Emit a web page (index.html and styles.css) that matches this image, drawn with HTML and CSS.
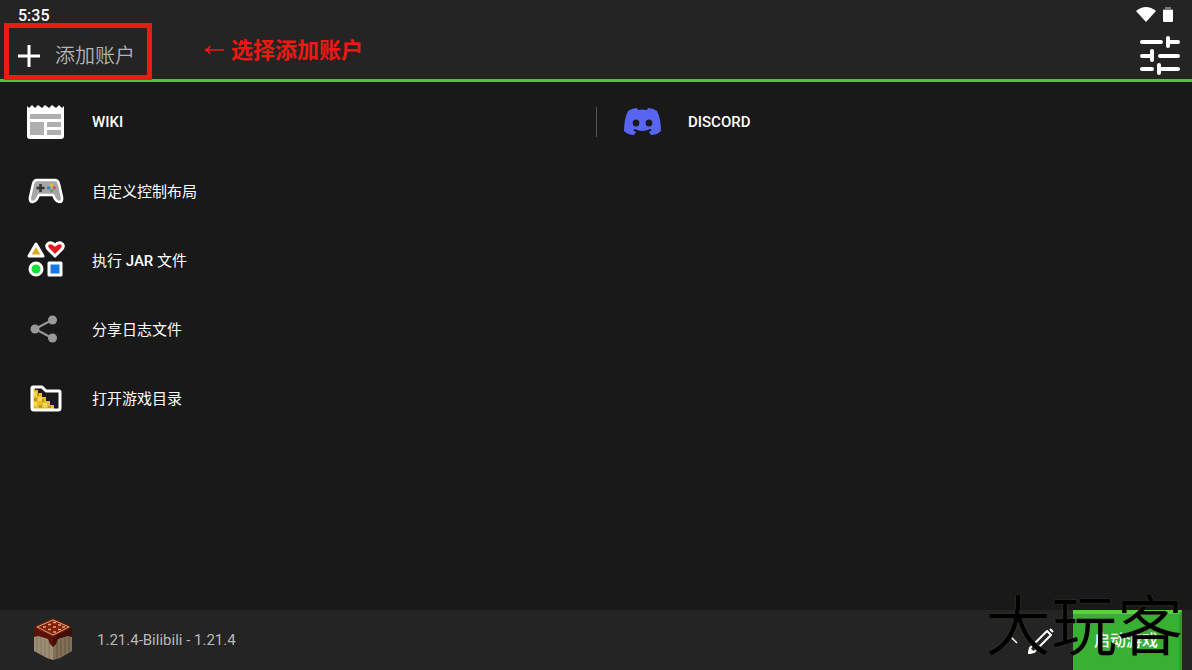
FILE: index.html
```html
<!DOCTYPE html>
<html lang="zh-CN">
<head>
    <meta charset="UTF-8">
    <meta name="viewport" content="width=device-width, initial-scale=1.0">
    <title>启动器</title>
    <link rel="stylesheet" href="styles.css">
</head>
<body>
    <header class="header">
        <div class="status-bar">
            <span class="clock">5:35</span>
            <svg class="status-icons" width="36" height="20" viewBox="0 0 36 20">
                <path d="M0 4Q10 -4 20 4L10 15Z" fill="#fff"/>
                <path d="M29 0h6v2h2v4H27V2h2z" fill="#777"/>
                <rect x="27" y="3" width="10" height="12" rx="1" fill="#fff"/>
            </svg>
        </div>
        <div class="toolbar">
            <button type="button" class="account">
                <svg width="22" height="22" viewBox="0 0 22 22"><path d="M11 0v22M0 11h22" stroke="#fff" stroke-width="3"/></svg>
                <span>添加账户</span>
            </button>
            <button type="button" class="settings" aria-label="设置">
                <svg width="40" height="40" viewBox="0 0 40 40" fill="none" stroke="#fff" stroke-width="4" stroke-linecap="round">
                    <path d="M2 6h19M28 6h10M28 2v8M2 20h10M12 15v9M20 20h18M2 33h10M19 29v8M20 33h18"/>
                </svg>
            </button>
        </div>
        <!--标注-->
        <div class="mark-box"></div>
        <div class="mark-text"><svg width="20" height="12" viewBox="0 0 20 12" fill="none" stroke="#f01810" stroke-width="1.5"><path d="M20 5H1M6 1Q5 4 1 5Q5 6 6 9"/></svg>选择添加账户</div>
    </header>

    <main class="main">
        <nav class="menu">
            <a class="menu-item" href="#">
                <svg class="icon" width="38" height="38" viewBox="0 0 38 38">
                    <path d="M0 3l2 2 3-3 3 3 3-3 4 3 3-3 4 3 3-3 4 3 3-3 3 3 2-2v30q0 3-3 3H3q-3 0-3-3z" fill="#fff"/>
                    <path d="M3 11h31v5H3zM3 19h14v13H3zM20 19h14v5H20zM20 27h14v5H20z" fill="#b0b0b0"/>
                </svg>
                <strong>WIKI</strong>
            </a>
            <a class="menu-item" href="#">
                <svg class="icon" width="38" height="38" viewBox="0 0 38 38">
                    <path d="M10 8h18q3 0 4 4l3 13q1 5-3 5-2 0-4-3l-2-4H12l-2 4q-2 3-4 3-4 0-3-5l3-13q1-4 4-4z" fill="#a6a6a6" stroke="#fff" stroke-width="2.500" stroke-linejoin="round"/>
                    <path d="M13.500 12v8M9.500 16h8" stroke="#333" stroke-width="2.500"/>
                    <circle cx="24.500" cy="13" r="1.700" fill="#e8bd30"/>
                    <circle cx="21.500" cy="16" r="1.700" fill="#3686bd"/>
                    <circle cx="27.500" cy="16" r="1.700" fill="#e05550"/>
                    <circle cx="24.500" cy="19" r="1.700" fill="#56a860"/>
                </svg>
                <span>自定义控制布局</span>
            </a>
            <a class="menu-item" href="#">
                <svg class="icon" width="38" height="38" viewBox="0 0 38 38" stroke="#fff" stroke-width="3" stroke-linejoin="round">
                    <path d="M9 3L16 15H2z" fill="#e0a52c"/>
                    <path d="M28 15L21 8Q18 4 22 2 25 1 28 4 31 1 34 2 38 4 35 8z" fill="#e51920"/>
                    <circle cx="9" cy="28" r="6" fill="#16df38"/>
                    <path d="M22 22h12v12H22z" fill="#1677e5"/>
                </svg>
                <span>执行 <strong>JAR</strong> 文件</span>
            </a>
            <a class="menu-item" href="#">
                <svg class="icon" width="38" height="38" viewBox="0 0 38 38" fill="#999">
                    <path d="M25 10L8 19L25 28" fill="none" stroke="#999" stroke-width="2"/>
                    <circle cx="25.500" cy="10" r="4.500"/><circle cx="8" cy="19" r="4.500"/><circle cx="25.500" cy="28" r="4.500"/>
                </svg>
                <span>分享日志文件</span>
            </a>
            <a class="menu-item" href="#">
                <svg class="icon" width="38" height="38" viewBox="0 0 38 38">
                    <path d="M5 8h3v3h3v3h4v4h4v4h4v4h4v4H5z" fill="#e7bd2c"/>
                    <path d="M6 13h4v4H6zM11 18h4v4h-4zM16 24h4v4h-4zM6 23h4v4H6z" fill="#f7d85b"/>
                    <path d="M10 14h2v3h-2zM7 19h3v3H7zM15 20h2v3h-2zM12 26h3v3h-3zM21 27h3v2h-3z" fill="#c8931d"/>
                    <path d="M6 8h9l4 4h13q1 0 1 1v16q0 2-2 2H7q-2 0-2-2V9q0-1 1-1z" fill="none" stroke="#fff" stroke-width="3" stroke-linejoin="round"/>
                </svg>
                <span>打开游戏目录</span>
            </a>
        </nav>
        <nav class="menu menu-right">
            <a class="menu-item" href="#">
                <svg class="icon" width="38" height="38" viewBox="0 0 38 38">
                    <path d="M14 5Q9 5 5 8Q1 16 1 28Q5 32 11 32L13 29L10 27L12 26Q19 30 27 26L29 27L26 29L28 32Q34 32 38 28Q38 16 34 8Q30 5 25 5L24 7Q19 6 15 7Z" fill="#5865f2"/>
                    <ellipse cx="13" cy="20" rx="3.300" ry="3.600" fill="#191919"/>
                    <ellipse cx="26" cy="20" rx="3.300" ry="3.600" fill="#191919"/>
                </svg>
                <strong>DISCORD</strong>
            </a>
        </nav>
    </main>

    <footer class="footer">
        <svg class="block-icon" width="40" height="42" viewBox="0 0 40 42">
            <path d="M1 12L20 20V41L14 39L1 32z" fill="#9c8e74"/>
            <path d="M39 12L20 20V41L27 39L39 32z" fill="#807158"/>
            <path d="M4 17v16M8 19v16M12 21v16M16 23v16" stroke="#83765f"/>
            <path d="M24 23v16M28 21v16M32 19v16M36 17v16" stroke="#62533e"/>
            <path d="M1 8L20 18V28L17 25L15 20L12 19L5 17L1 18z" fill="#5c1209"/>
            <path d="M39 8L20 18V28L23 25L25 20L28 19L35 17L39 18z" fill="#430c07"/>
            <path d="M20 -1L39 8L20 18L1 8z" fill="#7c1b0c"/>
            <path d="M20 1L36 8L20 16L4 8z" fill="#82200e" stroke="#dda672"/>
            <path d="M10 8h3M15 5.500h3M20 3.500h3M15 10.500h3M20 8h3M25 6h3M20 13h3M25 10.500h3M29 8h3" stroke="#dda672" stroke-width="1.500"/>
        </svg>
        <select class="version" aria-label="游戏版本">
            <option>1.21.4-Bilibili - 1.21.4</option>
        </select>
        <svg class="caret" width="10" height="6" viewBox="0 0 10 6"><path d="M1 0L7 6" fill="none" stroke="#fff" stroke-width="1.500"/></svg>
        <button type="button" class="edit" aria-label="编辑">
            <svg width="28" height="28" viewBox="0 0 28 28" fill="none" stroke="#fff" stroke-width="2" stroke-linejoin="round"><path d="M1 27L2 22L19 5L23 9L6 26zM22 3L25 6"/><path d="M1 27L2 23L5 26z" fill="#fff"/></svg>
        </button>
        <button type="button" class="play">启动游戏</button>
        <div class="watermark">大玩客</div>
    </footer>
</body>
</html>
```
FILE: styles.css
```css
* {
    box-sizing: border-box;
}

body {
    display: flex;
    flex-direction: column;
    min-height: 100vh;
    margin: 0;
    background: #191919;
    color: #fff;
    font-family: Roboto, "Noto Sans CJK SC", sans-serif;
    font-size: 15px;
}

button, select {
    padding: 0;
    border: 0;
    background: none;
    color: inherit;
    font: inherit;
}

strong {
    font-weight: 500;
}

svg {
    display: block;
    flex: none;
    overflow: visible;
}

.header {
    position: relative;
    border-bottom: 3px solid #5bbd48;
    background: #242424;
}

.status-bar {
    display: flex;
    justify-content: space-between;
    height: 32px;
    padding: 7px 20px 0 18px;
}

.clock {
    font-size: 16px;
    font-weight: 500;
    line-height: 18px;
}

.toolbar {
    display: flex;
    justify-content: space-between;
    align-items: center;
    height: 47px;
    padding: 0 12px 0 18px;
}

.account {
    display: flex;
    align-items: center;
    gap: 15px;
    color: #b4b4b4;
    font-size: 20px;
    font-weight: 350;
    line-height: 30px;
}

/* 红色标注 */
.mark-box {
    position: absolute;
    top: 23px;
    left: 4px;
    width: 148px;
    height: 57px;
    border: 5px solid #e91b12;
}

.mark-text {
    position: absolute;
    top: 36px;
    left: 204px;
    display: flex;
    align-items: center;
    gap: 7px;
    color: #f01810;
    font-size: 22px;
    font-weight: 700;
    line-height: 30px;
}

.main {
    display: grid;
    grid-template-columns: 1fr 1fr;
    flex: 1;
    padding: 5px 0;
}

.menu-item {
    display: flex;
    align-items: center;
    gap: 27px;
    height: 69px;
    padding-left: 27px;
    color: #fff;
    text-decoration: none;
}

.menu-right .menu-item {
    position: relative;
}

.menu-right .menu-item::before {
    content: "";
    position: absolute;
    top: 20px;
    left: 0;
    width: 1px;
    height: 30px;
    background: #555;
}

.footer {
    position: relative;
    display: flex;
    align-items: center;
    height: 60px;
    padding: 0 10px 0 33px;
    background: #242424;
}

.version {
    flex: 1;
    min-width: 0;
    height: 40px;
    padding-left: 24px;
    appearance: none;
    color: #b8b8b8;
}

.edit {
    margin: 0 17px 0 8px;
}

.play {
    width: 109px;
    height: 60px;
    padding-bottom: 6px;
    border-top: 4px solid #57d536;
    border-right: 3px solid #329c2b;
    background: #38b034;
    font-size: 16px;
    font-weight: 500;
}

/* 水印 */
.watermark {
    position: absolute;
    right: 9px;
    bottom: 9px;
    color: #000;
    font-size: 66px;
    font-weight: 350;
    line-height: 66px;
    text-shadow: 0 0 1px #75683c;
    pointer-events: none;
}
```
